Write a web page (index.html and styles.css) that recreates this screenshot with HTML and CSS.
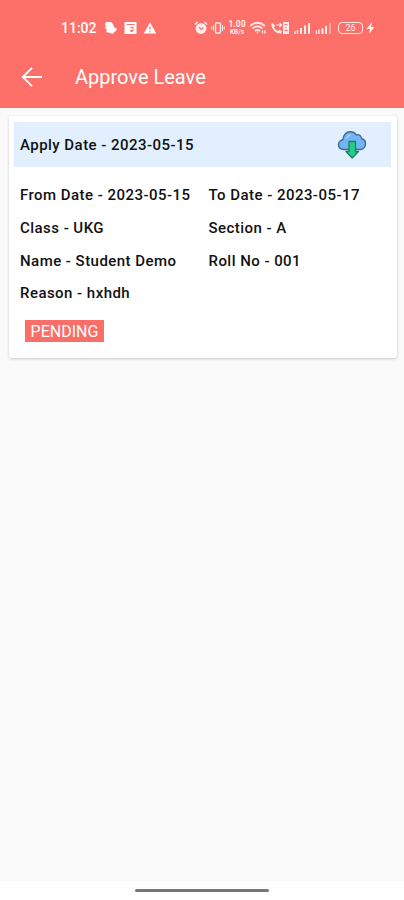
FILE: index.html
```
<!DOCTYPE html>
<html lang="en">
<head>
<meta charset="utf-8">
<title>Approve Leave</title>
<link rel="stylesheet" href="styles.css">
</head>
<body>
<div class="screen">
  <header class="header">
    <div class="status">
      <div class="status-left">
        <span class="time">11:02</span>
        <svg width="14" height="14" viewBox="0 0 14 14"><path d="M2 1h5l2 2 1 3 3 2-1 2-2 1-1 2-3-1-4-1 1-2-2-2 1-2-1-2z" fill="#fff"/></svg>
        <svg width="13" height="14" viewBox="0 0 13 14"><path d="M.5 1h12v12H.5z" fill="#fff"/><path d="M2.500 3.500h8M9 6v4M9 6l-3 1" stroke="#fc7068" fill="none"/><circle cx="7.500" cy="10" r="1.300" fill="#fc7068"/></svg>
        <svg width="14" height="14" viewBox="0 0 14 14"><path d="M7 1.500 13.300 12.500H.7z" fill="#fff"/><path d="M7 5.500v3.200M7 10v1.300" stroke="#fc7068" stroke-width="1.200"/></svg>
      </div>
      <div class="status-right">
        <svg width="14" height="14" viewBox="0 0 14 14"><circle cx="7" cy="7.500" r="5.400" fill="#fff"/><path d="M1 3.500 3.500 1.200M10.500 1.200 13 3.500" stroke="#fff" stroke-width="1.600"/><path d="M5 6.200 7 8.500l2.500-2" fill="none" stroke="#fc7068" stroke-width="1.200"/></svg>
        <svg width="14" height="14" viewBox="0 0 14 14" fill="none" stroke="#fff"><rect x="4.500" y="2" width="5" height="10" rx="1" stroke-width="1.400"/><path d="M2.500 4v6M11.500 4v6M.8 5.500v3M13.200 5.500v3"/></svg>
        <span class="speed"><b>1.00</b><i>KB/s</i></span>
        <svg width="18" height="14" viewBox="0 0 18 14" fill="none" stroke="#fff" stroke-width="1.700"><path d="M1 5q7.500-6.500 15 0M3.500 7.500q5-4.200 10 0M6 10q2.500-2.200 5 0"/><path d="M8.500 10.500v2M13.500 9.500v3M15.800 9.500v3" stroke-width="1.300"/></svg>
        <svg width="20" height="14" viewBox="0 0 20 14"><path d="M1 3l2-1 2 3-1 1.500q1.300 2.500 4 3.500L9.500 8.500 12 10.500l-1 2Q3 12.500 1 3z" fill="#fff"/><path d="M6 4h5M9.500 2l2 2-2 2" stroke="#fff" fill="none" stroke-width="1.200"/><path d="M13 1h6v12h-6z" fill="#fff"/><path d="M14.500 3.500h3M16 5.500v2M14.500 9.500h3" stroke="#fc7068"/></svg>
        <svg width="19" height="14" viewBox="0 0 19 14" stroke="#fff"><path d="M2 10v3M4.500 9v4" stroke-width="1.400"/><path d="M8 7v6M12 4.500V13M16 2v11" stroke-width="2"/></svg>
        <svg width="17" height="14" viewBox="0 0 17 14" stroke="#fff"><path d="M1.500 9.500V13M4 8.500V13" stroke-width="1.400"/><path d="M7.500 7.500V13M11 5v8" stroke-width="2"/><path d="M15 2v11" stroke-width="1.500" opacity=".55"/></svg>
        <span class="battery">26</span>
        <svg class="bolt" width="9" height="14" viewBox="0 0 9 14"><path d="M6 1 .5 8H4L3 13l5.500-7H5.200z" fill="#fff"/></svg>
      </div>
    </div>
    <div class="appbar">
      <svg width="24" height="24" viewBox="0 0 24 24" fill="none" stroke="#fff" stroke-width="1.800"><path d="M22 12H3M12 2.800 2.800 12 12 21.200"/></svg>
      <h1>Approve Leave</h1>
    </div>
  </header>
  <main class="content">
    <section class="card">
      <div class="card-head">
        <span>Apply Date - 2023-05-15</span>
        <svg width="30" height="30" viewBox="0 0 30 30" stroke-linejoin="round"><path d="M7 19.500C3 19.500 1.500 17 1.500 14.500S4 10 6 9.500C6 5 9.500 1.800 13 1.800c3.500 0 5 1 6.200 3 3-.8 5.300 1.200 5.500 4 3 .5 3.800 2.700 3.800 5.200s-1.800 5.500-5 5.500z" fill="#70b5f5" stroke="#44698f" stroke-width="1.400"/><path d="M9.500 8.500q1-3 4-3.500" fill="none" stroke="#aed7fb" stroke-width="1.200"/><path d="M12 11.500h6.500V21.500h3L15.200 28 9 21.500h3z" fill="#20d087" stroke="#2b7868" stroke-width="1.300"/></svg>
      </div>
      <div class="details">
        <span>From Date - 2023-05-15</span><span>To Date - 2023-05-17</span>
        <span>Class - UKG</span><span>Section - A</span>
        <span>Name - Student Demo</span><span>Roll No - 001</span>
        <span>Reason - hxhdh</span>
      </div>
      <span class="badge">PENDING</span>
    </section>
  </main>
  <footer class="nav"><div class="handle"></div></footer>
</div>
</body>
</html>
```
FILE: styles.css
```
* { box-sizing: border-box; }
body { margin: 0; font-family: Roboto, "Liberation Sans", sans-serif; color: #111; }
.screen { width: 404px; height: 900px; display: flex; flex-direction: column; background: #fafafa; }
.header { height: 108px; background: #fd7069; color: #fff; }
svg { display: block; flex: none; }
.status { height: 54px; padding: 2px 29px 0 61px; display: flex; justify-content: space-between; align-items: center; }
.status-left { display: flex; align-items: center; gap: 6px; }
.time { width: 37px; font-size: 14px; font-weight: 500; white-space: nowrap; }
.status-right { display: flex; align-items: center; gap: 3px; opacity: .88; }
.speed { width: 18px; height: 16px; display: flex; flex-direction: column; align-items: center; justify-content: space-between; }
.speed b { font-size: 8.5px; line-height: 9px; font-weight: 700; }
.speed i { font-size: 6.5px; line-height: 7px; font-style: normal; font-weight: 700; }
.battery { width: 25px; height: 12px; margin-left: 3px; border: 1px solid #fff; border-radius: 4px; font-size: 9px; line-height: 10px; text-align: center; }
.appbar { height: 46px; padding-left: 20px; display: flex; align-items: center; }
.appbar h1 { margin: 0 0 0 31px; font-size: 20px; font-weight: 400; white-space: nowrap; }
.content { flex: 1; padding: 8px 7px 0 9px; }
.card { height: 242px; padding: 6px 6px 0 5px; background: #fff; border-radius: 3px; box-shadow: 0 1px 3px rgba(0, 0, 0, .2); font-size: 15px; font-weight: 500; letter-spacing: .46px; }
.card-head { height: 45px; padding: 0 24px 0 6px; display: flex; align-items: center; justify-content: space-between; background: #e1efff; }
.details { margin-top: 12px; padding-left: 6px; display: grid; grid-template-columns: 188.5px 1fr; grid-auto-rows: 32.7px; align-items: center; white-space: nowrap; }
.badge { display: block; width: 79px; height: 22px; margin: 10px 0 0 11px; background: #f96f68; color: #fff; font-size: 16px; font-weight: 400; line-height: 23px; letter-spacing: 0; text-align: center; }
.nav { height: 19px; display: flex; justify-content: center; align-items: center; background: #fff; }
.handle { width: 134px; height: 3px; border-radius: 2px; background: #777; }
```
